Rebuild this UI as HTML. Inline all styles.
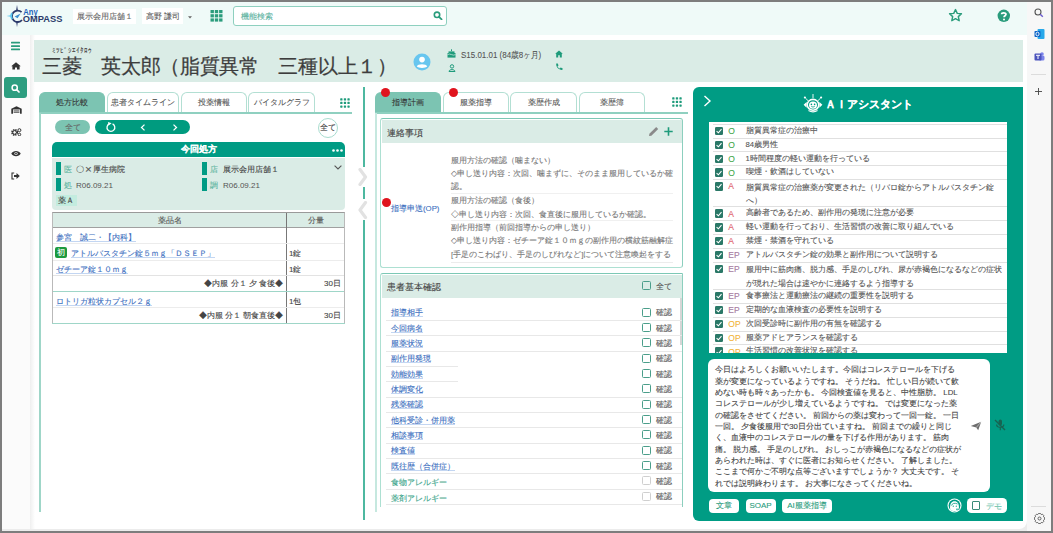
<!DOCTYPE html>
<html><head><meta charset="utf-8">
<style>
*{box-sizing:border-box;margin:0;padding:0}
html,body{width:1053px;height:533px;overflow:hidden}
body{position:relative;background:#7d7d7d;font-family:"Liberation Sans",sans-serif;color:#444;font-size:8px;line-height:1;-webkit-text-stroke:0.1px currentColor}
.a{position:absolute}
.nw{white-space:nowrap}
.tab{position:absolute;top:92px;height:21px;border:1px solid #b3dfd3;border-bottom:none;border-radius:6px 6px 0 0;background:#fff;font-size:8px;color:#555;text-align:center;line-height:20px}
.tab.on{background:#7cc4b2;border-color:#7cc4b2;color:#333}
.lnk{color:#3a6ec0;text-decoration:underline;text-decoration-color:#c3d6f2;font-size:7.8px!important}
</style></head><body>
<!-- window -->
<div class="a" style="left:2px;top:2px;width:1049px;height:529px;background:#ececec"></div>
<!-- header -->
<div class="a" style="left:2px;top:2px;width:1025px;height:33px;background:#effaf8"></div>
<!-- edge sidebar -->
<div class="a" style="left:1027px;top:2px;width:24px;height:529px;background:#f7f7f7"></div>
<!-- left sidebar -->
<div class="a" style="left:2px;top:35px;width:28px;height:494px;background:#fbfbfb"></div>
<!-- main white -->
<div class="a" style="left:30px;top:35px;width:997px;height:494px;background:#fff;border-radius:0 0 8px 0"></div>
<div class="a" style="left:30px;top:35px;width:5px;height:494px;background:linear-gradient(90deg,#efefef,#fff)"></div>
<!-- patient band -->
<div class="a" style="left:34px;top:40px;width:989px;height:42px;background:#daece6"></div>


<!-- HEADER CONTENT -->
<svg class="a" style="left:4px;top:2px" width="64" height="30" viewBox="0 0 64 30">
 <path d="M13 3 L13.9 8.6 L12.1 8.6 Z" fill="#2b3a6b"/>
 <path d="M13 25 L13.9 19.4 L12.1 19.4 Z" fill="#2b3a6b"/>
 <path d="M2.5 14 L8.2 13 L8.2 15 Z" fill="#5cc6ef"/>
 <path d="M17.6 10.2 A5.7 5.7 0 1 0 18 18" fill="none" stroke="#2b3a6b" stroke-width="1.8"/>
 <path d="M8 11 A5.7 5.7 0 0 0 8.2 17.2" fill="none" stroke="#5cc6ef" stroke-width="1.7"/>
 <path d="M10.6 14.6 L16.6 11.6 L13.6 16.2 Z" fill="#3a8fd0"/>
 <text x="19.3" y="12.6" font-family="Liberation Sans" font-weight="bold" font-size="9.2" fill="#1f64b8" textLength="14.5" lengthAdjust="spacingAndGlyphs">Any</text>
 <text x="18.8" y="19.9" font-family="Liberation Sans" font-weight="bold" font-size="9.6" fill="#2b3a6b" textLength="39.6" lengthAdjust="spacingAndGlyphs">OMPASS</text>
</svg>
<div class="a nw" style="left:73px;top:9px;width:63px;height:15px;background:#fff;color:#666;font-size:8px;line-height:16px;padding-left:3.5px">展示会用店舗１</div>
<div class="a nw" style="left:142px;top:8px;width:41px;height:16px;background:#fff;color:#555;font-size:8px;line-height:18px;padding-left:4px">高野 謙司</div>
<svg class="a" style="left:187.5px;top:16px" width="4" height="3"><path d="M0 0.3H4L2 2.6Z" fill="#666"/></svg>
<svg class="a" style="left:210px;top:10px" width="13" height="12" viewBox="0 0 13 12">
 <g fill="#2a9c7c"><rect x="0.5" y="0" width="3.4" height="3.2"/><rect x="4.8" y="0" width="3.4" height="3.2"/><rect x="9.1" y="0" width="3.4" height="3.2"/>
 <rect x="0.5" y="4.2" width="3.4" height="3.2"/><rect x="4.8" y="4.2" width="3.4" height="3.2"/><rect x="9.1" y="4.2" width="3.4" height="3.2"/>
 <rect x="0.5" y="8.4" width="3.4" height="3.2"/><rect x="4.8" y="8.4" width="3.4" height="3.2"/><rect x="9.1" y="8.4" width="3.4" height="3.2"/></g>
</svg>
<div class="a" style="left:233px;top:6px;width:214px;height:20px;background:#fff;border:1px solid #8ed0bf;border-radius:3px"></div>
<div class="a nw" style="left:241px;top:12px;font-size:8px;color:#5cb39f;line-height:9px">機能検索</div>
<svg class="a" style="left:433px;top:11px" width="10" height="9" viewBox="0 0 10 9"><circle cx="4" cy="3.8" r="2.7" fill="none" stroke="#2a9c7c" stroke-width="1.6"/><path d="M6 5.8 L8.6 8.3" stroke="#2a9c7c" stroke-width="1.8" stroke-linecap="round"/></svg>
<svg class="a" style="left:948px;top:8px" width="15" height="15" viewBox="0 0 24 24"><path d="M12 2.5 L14.8 8.6 L21.5 9.3 L16.5 13.8 L17.9 20.4 L12 17 L6.1 20.4 L7.5 13.8 L2.5 9.3 L9.2 8.6 Z" fill="none" stroke="#2a9c7c" stroke-width="2.3" stroke-linejoin="round"/></svg>
<svg class="a" style="left:997px;top:9px" width="14" height="14" viewBox="0 0 14 14"><circle cx="6.8" cy="6.8" r="6.2" fill="#2a9c7c"/><path d="M4.6 5.2 C4.6 3.4 9 3.3 9 5.3 C9 6.7 7 6.8 7 8.3" fill="none" stroke="#fff" stroke-width="1.7"/><circle cx="7" cy="10.4" r="1" fill="#fff"/></svg>
<!-- edge sidebar icons -->
<svg class="a" style="left:1034px;top:8px" width="10" height="10" viewBox="0 0 10 10"><circle cx="4" cy="4" r="3" fill="none" stroke="#555" stroke-width="1.1"/><path d="M6.2 6.2 L8.8 8.8" stroke="#6a5acd" stroke-width="1.4"/></svg>
<svg class="a" style="left:1034px;top:28px" width="11" height="12" viewBox="0 0 11 12"><rect x="3.5" y="1" width="7" height="10" rx="1" fill="#28a8ea"/><rect x="0.5" y="3" width="6" height="6" rx="0.8" fill="#0a64c8"/><ellipse cx="3.5" cy="6" rx="1.6" ry="1.9" fill="none" stroke="#fff" stroke-width="0.9"/></svg>
<svg class="a" style="left:1034px;top:51px" width="11" height="11" viewBox="0 0 11 11"><circle cx="8" cy="3" r="1.8" fill="#7b83eb"/><rect x="5" y="4.5" width="5.5" height="5" rx="1.5" fill="#7b83eb"/><rect x="0.5" y="2.5" width="7" height="7" rx="1" fill="#4b53bc"/><path d="M2 4.3H6M4 4.3V8" stroke="#fff" stroke-width="1"/></svg>
<div class="a" style="left:1031px;top:74px;width:15px;height:1px;background:#dcdcdc"></div>
<svg class="a" style="left:1034px;top:87px" width="9" height="9" viewBox="0 0 9 9"><path d="M4.5 1V8M1 4.5H8" stroke="#444" stroke-width="0.9"/></svg>
<div class="a" style="left:1031px;top:506px;width:15px;height:1px;background:#dcdcdc"></div>
<svg class="a" style="left:1034px;top:513px" width="11" height="11" viewBox="0 0 11 11"><path d="M9.63 3.98 L10.62 4.59 L10.62 6.41 L9.63 7.02 L9.49 7.35 L9.76 8.48 L8.48 9.76 L7.35 9.49 L7.02 9.63 L6.41 10.62 L4.59 10.62 L3.98 9.63 L3.65 9.49 L2.52 9.76 L1.24 8.48 L1.51 7.35 L1.37 7.02 L0.38 6.41 L0.38 4.59 L1.37 3.98 L1.51 3.65 L1.24 2.52 L2.52 1.24 L3.65 1.51 L3.98 1.37 L4.59 0.38 L6.41 0.38 L7.02 1.37 L7.35 1.51 L8.48 1.24 L9.76 2.52 L9.49 3.65 Z" fill="none" stroke="#555" stroke-width="0.9" stroke-linejoin="round"/><circle cx="5.5" cy="5.5" r="1.5" fill="none" stroke="#555" stroke-width="0.9"/></svg>


<!-- LEFT SIDEBAR ICONS -->
<svg class="a" style="left:11px;top:41px" width="10" height="10" viewBox="0 0 10 10"><g fill="#2a9c7c"><rect x="0" y="0.8" width="9" height="1.7" rx="0.5"/><rect x="0" y="4.2" width="9" height="1.7" rx="0.5"/><rect x="0" y="7.6" width="9" height="1.7" rx="0.5"/></g></svg>
<svg class="a" style="left:11px;top:62px" width="10" height="8" viewBox="0 0 10 8"><path d="M5 0.3 L9.8 4.3 L8.6 4.3 L8.6 7.6 L6 7.6 L6 5.4 L4 5.4 L4 7.6 L1.4 7.6 L1.4 4.3 L0.2 4.3 Z" fill="#333"/></svg>
<div class="a" style="left:4px;top:77px;width:23px;height:21px;background:#2e9e80;border-radius:3px"></div>
<svg class="a" style="left:11px;top:84px" width="9" height="9" viewBox="0 0 9 9"><circle cx="3.7" cy="3.7" r="2.6" fill="none" stroke="#fff" stroke-width="1.5"/><path d="M5.6 5.6 L8 8" stroke="#fff" stroke-width="1.7" stroke-linecap="round"/></svg>
<svg class="a" style="left:11px;top:106px" width="11" height="8" viewBox="0 0 11 8"><path d="M0.3 2.8 L5.5 0.2 L10.7 2.8 L10.7 7.8 L9 7.8 L9 3.6 L2 3.6 L2 7.8 L0.3 7.8 Z" fill="#333"/><rect x="2.6" y="4.4" width="5.8" height="1" fill="#555"/><rect x="2.6" y="5.8" width="5.8" height="1" fill="#555"/></svg>
<svg class="a" style="left:11px;top:128px" width="11" height="8" viewBox="0 0 11 8"><circle cx="3.6" cy="4.4" r="2.6" fill="none" stroke="#333" stroke-width="1.8" stroke-dasharray="1.3 0.8"/><circle cx="3.6" cy="4.4" r="1.8" fill="none" stroke="#333" stroke-width="1"/><circle cx="8.4" cy="2.2" r="1.5" fill="none" stroke="#333" stroke-width="1"/><circle cx="8.4" cy="6.5" r="1.3" fill="none" stroke="#333" stroke-width="1"/></svg>
<svg class="a" style="left:11px;top:150px" width="10" height="7" viewBox="0 0 10 7"><path d="M0.3 3.5 C2 0 8 0 9.7 3.5 C8 7 2 7 0.3 3.5 Z" fill="#333"/><circle cx="5" cy="3.5" r="1.6" fill="#fafafa"/><circle cx="5" cy="3.5" r="0.9" fill="#333"/></svg>
<svg class="a" style="left:11px;top:172px" width="9" height="8" viewBox="0 0 9 8"><path d="M3.2 1 L1 1 L1 7 L3.2 7" fill="none" stroke="#333" stroke-width="1.1"/><path d="M3 3 L5.5 3 L5.5 1 L8.8 4 L5.5 7 L5.5 5 L3 5 Z" fill="#333"/></svg>

<!-- PATIENT BAND -->
<div class="a nw" style="left:52px;top:47px;font-size:6.8px;color:#555;letter-spacing:0px;line-height:8px">ﾐﾂﾋﾞｼｴｲﾀﾛｳ</div>
<div class="a nw" style="left:42px;top:55px;font-size:19.6px;letter-spacing:-0.3px;color:#3d3d3d;line-height:22px;-webkit-text-stroke:0.25px #3d3d3d">三菱　英太郎（脂質異常　三種以上１）</div>
<svg class="a" style="left:413px;top:53px" width="18" height="18" viewBox="0 0 18 18"><circle cx="9" cy="9" r="8.5" fill="#67c6ef"/><circle cx="9" cy="6.6" r="2.8" fill="#fff"/><path d="M3.8 13.6 C4.5 10.4 13.5 10.4 14.2 13.6 C12.6 15.3 5.4 15.3 3.8 13.6 Z" fill="#fff"/></svg>
<svg class="a" style="left:447px;top:49px" width="9" height="9" viewBox="0 0 9 9"><rect x="0.5" y="4" width="8" height="4.6" fill="#1e9b7b"/><rect x="1.5" y="2.4" width="6" height="1.8" fill="#1e9b7b"/><rect x="4" y="0.3" width="1" height="1.8" fill="#1e9b7b"/><path d="M0.5 5.6 Q2.5 4.6 4.5 5.6 Q6.5 6.6 8.5 5.6" stroke="#daece6" stroke-width="0.7" fill="none"/></svg>
<div class="a nw" style="left:460.5px;top:49.5px;font-size:9.4px;color:#555;line-height:10px;transform:scaleX(0.85);transform-origin:0 0">S15.01.01 (84歳8ヶ月)</div>
<svg class="a" style="left:448px;top:64px" width="8" height="8" viewBox="0 0 8 8"><circle cx="4" cy="2.4" r="1.7" fill="none" stroke="#1e9b7b" stroke-width="1"/><path d="M1 7.5 C1 5 7 5 7 7.5 Z" fill="none" stroke="#1e9b7b" stroke-width="1"/></svg>
<svg class="a" style="left:555px;top:50px" width="8" height="8" viewBox="0 0 8 8"><path d="M4 0.5 L7.8 3.8 L6.8 3.8 L6.8 7.5 L4.8 7.5 L4.8 5.3 L3.2 5.3 L3.2 7.5 L1.2 7.5 L1.2 3.8 L0.2 3.8 Z" fill="#1e9b7b"/></svg>
<svg class="a" style="left:555px;top:63px" width="8" height="8" viewBox="0 0 8 8"><path d="M1.2 0.6 L2.8 0.4 L3.5 2.4 L2.5 3.2 C3 4.4 3.7 5.2 4.8 5.6 L5.6 4.6 L7.6 5.3 L7.4 6.9 C4 7.3 0.8 4.2 1.2 0.6 Z" fill="#1e9b7b"/></svg>


<!-- LEFT PANEL -->
<div class="tab on" style="left:39px;width:66px">処方比較</div>
<div class="tab" style="left:107px;width:72px">患者タイムライン</div>
<div class="tab" style="left:181px;width:66px">投薬情報</div>
<div class="tab" style="left:248px;width:67px">バイタルグラフ</div>
<div class="a" style="left:39px;top:112px;width:313px;height:2px;background:#8fd0c0"></div>
<svg class="a" style="left:340px;top:98px" width="10" height="10" viewBox="0 0 10 10"><g fill="#1e9b7b"><rect x="0.2" y="0.2" width="2.3" height="2.3" rx="0.6"/><rect x="3.8" y="0.2" width="2.3" height="2.3" rx="0.6"/><rect x="7.4" y="0.2" width="2.3" height="2.3" rx="0.6"/><rect x="0.2" y="3.8" width="2.3" height="2.3" rx="0.6"/><rect x="3.8" y="3.8" width="2.3" height="2.3" rx="0.6"/><rect x="7.4" y="3.8" width="2.3" height="2.3" rx="0.6"/><rect x="0.2" y="7.4" width="2.3" height="2.3" rx="0.6"/><rect x="3.8" y="7.4" width="2.3" height="2.3" rx="0.6"/><rect x="7.4" y="7.4" width="2.3" height="2.3" rx="0.6"/></g></svg>
<div class="a" style="left:39px;top:113px;width:2px;height:399px;background:#9fd6c8"></div>
<div class="a nw" style="left:55px;top:120px;width:35px;height:14px;border-radius:7px;background:#7cc4b2;color:#666;font-size:8px;line-height:16px;text-align:center">全て</div>
<div class="a" style="left:95px;top:120px;width:95px;height:14px;border-radius:7px;background:#009b7f"></div>
<svg class="a" style="left:105px;top:121px" width="12" height="12" viewBox="0 0 12 12"><path d="M7.6 2.9 A3.9 3.9 0 1 1 4.2 2.9" fill="none" stroke="#fff" stroke-width="1.3"/><path d="M3 1 L6.6 2.2 L3.6 4.6 Z" fill="#fff"/></svg>
<svg class="a" style="left:140px;top:124px" width="6" height="7" viewBox="0 0 6 7"><path d="M4.5 0.6 L1.5 3.5 L4.5 6.4" fill="none" stroke="#fff" stroke-width="1.3"/></svg>
<svg class="a" style="left:172px;top:124px" width="6" height="7" viewBox="0 0 6 7"><path d="M1.5 0.6 L4.5 3.5 L1.5 6.4" fill="none" stroke="#fff" stroke-width="1.3"/></svg>
<div class="a nw" style="left:318px;top:118px;width:20px;height:20px;border-radius:50%;border:1px solid #a8dccf;background:#fff;color:#444;font-size:8px;line-height:18px;text-align:center">全て</div>

<div class="a" style="left:52px;top:142px;width:293px;height:15px;background:#009b84;border-radius:5px 5px 0 0"></div>
<div class="a nw" style="left:52px;top:142px;width:293px;height:15px;color:#fff;font-size:8.5px;line-height:15px;text-align:center;font-weight:bold">今回処方</div>
<svg class="a" style="left:332px;top:149px" width="11" height="3" viewBox="0 0 11 3"><circle cx="1.5" cy="1.5" r="1.3" fill="#fff"/><circle cx="5.5" cy="1.5" r="1.3" fill="#fff"/><circle cx="9.5" cy="1.5" r="1.3" fill="#fff"/></svg>
<div class="a" style="left:52px;top:158px;width:293px;height:52px;background:#daece6;border-radius:0 0 4px 4px"></div>
<div class="a" style="left:56px;top:162px;width:5px;height:13px;background:#009b84"></div>
<div class="a" style="left:56px;top:178px;width:5px;height:13px;background:#009b84"></div>
<div class="a" style="left:202px;top:162px;width:5px;height:13px;background:#009b84"></div>
<div class="a" style="left:202px;top:178px;width:5px;height:13px;background:#009b84"></div>
<div class="a nw" style="left:64px;top:165px;font-size:8px;line-height:10px;color:#5fb5a0">医</div>
<div class="a nw" style="left:76px;top:165px;font-size:8px;line-height:10px;color:#444">〇<span style="display:inline-block;transform:scale(1.45,1.3);margin:0 1.8px 0 2.2px;color:#555">×</span>厚生病院</div>
<div class="a nw" style="left:64px;top:181px;font-size:8px;line-height:10px;color:#5fb5a0">処</div>
<div class="a nw" style="left:76px;top:181px;font-size:8px;line-height:10px;color:#555;-webkit-text-stroke:0">R06.09.21</div>
<div class="a nw" style="left:210px;top:165px;font-size:8px;line-height:10px;color:#5fb5a0">店</div>
<div class="a nw" style="left:223px;top:165px;font-size:8px;line-height:10px;color:#444">展示会用店舗１</div>
<div class="a nw" style="left:210px;top:181px;font-size:8px;line-height:10px;color:#5fb5a0">調</div>
<div class="a nw" style="left:223px;top:181px;font-size:8px;line-height:10px;color:#555;-webkit-text-stroke:0">R06.09.21</div>
<svg class="a" style="left:334px;top:165px" width="8" height="5" viewBox="0 0 8 5"><path d="M0.6 0.6 L4 4 L7.4 0.6" fill="none" stroke="#555" stroke-width="1.1"/></svg>
<div class="a nw" style="left:56px;top:195px;width:21px;height:11px;background:#c3ecdf;color:#444;font-size:8px;line-height:11px;padding-left:2px">薬Ａ</div>


<!-- RX TABLE -->
<div class="a" style="left:52px;top:212px;width:293px;height:112px;border:1px solid #b9b9b9;border-top:1.5px solid #9a9a9a;background:#fff"></div>
<div class="a" style="left:53px;top:213px;width:291px;height:15px;background:#daece6;border-bottom:1.5px solid #a0a0a0"></div>
<div class="a" style="left:286px;top:213px;width:1px;height:110px;background:#777"></div>
<div class="a nw" style="left:53px;top:213px;width:233px;height:15px;font-size:8px;line-height:15px;text-align:center;color:#555">薬品名</div>
<div class="a nw" style="left:287px;top:213px;width:57px;height:15px;font-size:8px;line-height:15px;text-align:center;color:#555">分量</div>
<div class="a" style="left:53px;top:243px;width:291px;height:1px;background:#ececec"></div>
<div class="a" style="left:53px;top:260px;width:291px;height:1px;background:#ececec"></div>
<div class="a" style="left:53px;top:275px;width:291px;height:1px;background:#e3e3e3"></div>
<div class="a" style="left:53px;top:291px;width:291px;height:1px;background:#9fd6c8"></div>
<div class="a" style="left:53px;top:307px;width:291px;height:1px;background:#ececec"></div>
<div class="a" style="left:52px;top:323px;width:293px;height:1px;background:#9fd6c8"></div>
<div class="a nw lnk" style="left:56px;top:233.0px;font-size:8px;line-height:10px">参宮　誠二・【内科】</div>
<div class="a nw" style="left:55px;top:247px;width:12px;height:11px;background:#1d9a3e;border-radius:2px;color:#fff;font-size:8px;line-height:11px;text-align:center">初</div>
<div class="a nw lnk" style="left:71px;top:249.0px;font-size:8px;line-height:10px">アトルバスタチン錠５ｍｇ「ＤＳＥＰ」</div>
<div class="a nw lnk" style="left:56px;top:265.0px;font-size:8px;line-height:10px">ゼチーア錠１０ｍｇ</div>
<div class="a nw lnk" style="left:56px;top:297.0px;font-size:8px;line-height:10px">ロトリガ粒状カプセル２ｇ</div>
<div class="a nw" style="left:289px;top:249.0px;font-size:8px;line-height:10px">1錠</div>
<div class="a nw" style="left:289px;top:265.0px;font-size:8px;line-height:10px">1錠</div>
<div class="a nw" style="left:289px;top:297.0px;font-size:8px;line-height:10px">1包</div>
<div class="a nw" style="left:150px;top:279px;width:133px;font-size:8px;line-height:10px;text-align:right">◆内服 分１ 夕 食後◆</div>
<div class="a nw" style="left:150px;top:311px;width:133px;font-size:8px;line-height:10px;text-align:right">◆内服 分１ 朝食直後◆</div>
<div class="a nw" style="left:290px;top:279px;width:51px;font-size:8px;line-height:10px;text-align:right">30日</div>
<div class="a nw" style="left:290px;top:311px;width:51px;font-size:8px;line-height:10px;text-align:right">30日</div>


<!-- MIDDLE PANEL -->
<div class="a" style="left:363px;top:87px;width:2px;height:433px;background:#4db8a0"></div>
<div class="a" style="left:362px;top:167px;width:4px;height:20px;background:#fff"></div><svg class="a" style="left:358px;top:168px" width="10" height="18" viewBox="0 0 10 18"><path d="M2 1.5 L7.5 9 L2 16.5" fill="none" stroke="#e2e2e2" stroke-width="3.2" stroke-linecap="round" stroke-linejoin="round"/></svg>
<div class="a" style="left:362px;top:199px;width:4px;height:21px;background:#fff"></div><svg class="a" style="left:358px;top:200.5px" width="10" height="18" viewBox="0 0 10 18"><path d="M7.5 1.5 L2 9 L7.5 16.5" fill="none" stroke="#e2e2e2" stroke-width="3.2" stroke-linecap="round" stroke-linejoin="round"/></svg>
<div class="tab on" style="left:375px;width:66px">指導計画</div>
<div class="tab" style="left:443px;width:66px">服薬指導</div>
<div class="tab" style="left:510px;width:67px">薬歴作成</div>
<div class="tab" style="left:579px;width:66px">薬歴簿</div>
<div class="a" style="left:381px;top:88px;width:9px;height:9px;border-radius:50%;background:#e0141e"></div>
<div class="a" style="left:449px;top:88px;width:9px;height:9px;border-radius:50%;background:#e0141e"></div>
<div class="a" style="left:375px;top:112px;width:313px;height:2px;background:#8fd0c0"></div>
<svg class="a" style="left:672px;top:97px" width="10" height="10" viewBox="0 0 10 10"><g fill="#1e9b7b"><rect x="0.2" y="0.2" width="2.3" height="2.3" rx="0.6"/><rect x="3.8" y="0.2" width="2.3" height="2.3" rx="0.6"/><rect x="7.4" y="0.2" width="2.3" height="2.3" rx="0.6"/><rect x="0.2" y="3.8" width="2.3" height="2.3" rx="0.6"/><rect x="3.8" y="3.8" width="2.3" height="2.3" rx="0.6"/><rect x="7.4" y="3.8" width="2.3" height="2.3" rx="0.6"/><rect x="0.2" y="7.4" width="2.3" height="2.3" rx="0.6"/><rect x="3.8" y="7.4" width="2.3" height="2.3" rx="0.6"/><rect x="7.4" y="7.4" width="2.3" height="2.3" rx="0.6"/></g></svg>
<div class="a" style="left:375px;top:113px;width:2px;height:399px;background:#c6e8df"></div>

<!-- card 1 -->
<div class="a" style="left:380px;top:118px;width:303px;height:150px;border:1.5px solid #ade0d2;border-top-color:#7cc8b5;border-right-color:#8ccfbe;border-radius:3px;background:#fff"></div>
<div class="a" style="left:381.5px;top:119.5px;width:300px;height:23px;background:#daece6"></div>
<div class="a nw" style="left:387px;top:128px;font-size:9px;line-height:10px;color:#444">連絡事項</div>
<svg class="a" style="left:648px;top:126px" width="12" height="11" viewBox="0 0 12 11"><path d="M1 10 L1.4 7.8 L8.2 1 L10.2 3 L3.4 9.8 Z" fill="#8a8a8a"/></svg>
<svg class="a" style="left:664px;top:127px" width="9" height="9" viewBox="0 0 9 9"><path d="M4.5 0.3V8.7M0.3 4.5H8.7" stroke="#1e9b7b" stroke-width="1.6"/></svg>
<div class="a" style="left:382px;top:198px;width:9px;height:9px;border-radius:50%;background:#e0141e"></div>
<div class="a nw" style="left:391px;top:204px;line-height:9px;color:#3a6ec0;font-size:7.8px">指導申送(OP)</div>
<div class="a nw" style="left:451px;top:153.5px;width:222px;font-size:7.85px;line-height:13.4px;color:#777">
服用方法の確認（噛まない）<br>◇申し送り内容：次回、噛まずに、そのまま服用しているか確<br>認。</div>
<div class="a" style="left:451px;top:193px;width:222px;height:1px;background:#f0f0f0"></div>
<div class="a nw" style="left:451px;top:194.3px;width:222px;font-size:7.85px;line-height:13.4px;color:#777">
服用方法の確認（食後）<br>◇申し送り内容：次回、食直後に服用しているか確認。</div>
<div class="a" style="left:451px;top:220px;width:222px;height:1px;background:#f0f0f0"></div>
<div class="a nw" style="left:451px;top:220.8px;width:222px;font-size:7.85px;line-height:13.4px;color:#777">
副作用指導（前回指導からの申し送り）<br>◇申し送り内容：ゼチーア錠１０ｍｇの副作用の横紋筋融解症<br>[手足のこわばり、手足のしびれなど]について注意喚起をする</div>
<div class="a" style="left:451px;top:262px;width:222px;height:1px;background:#ececec"></div>


<!-- card 2 -->
<div class="a" style="left:380px;top:273px;width:303px;height:234px;border:1.5px solid #ade0d2;border-top-color:#7cc8b5;border-right-color:#8ccfbe;border-bottom:none;border-radius:3px 0 0 0;background:#fff"></div>
<div class="a" style="left:680px;top:298px;width:1.5px;height:47px;background:#d6d6d6"></div>
<div class="a" style="left:381.5px;top:274.5px;width:300px;height:23.5px;background:#daece6"></div>
<div class="a nw" style="left:387px;top:282px;font-size:9px;line-height:10px;color:#444">患者基本確認</div>
<div class="a" style="left:642px;top:281px;width:9px;height:9px;border:1.3px solid #4a9e8a;border-radius:1.5px"></div>
<div class="a nw" style="left:656px;top:282.3px;font-size:8px;line-height:10px;color:#555">全て</div>
<div class="a" style="left:390px;top:507px;width:300px;height:20px;background:#fff"></div>
<div class="a nw lnk" style="left:391px;top:308.3px;font-size:7.8px;line-height:10px;">指導相手</div>
<div class="a" style="left:642px;top:307.5px;width:9px;height:9px;border:1.3px solid #4a9e8a;border-radius:1.5px"></div>
<div class="a nw" style="left:656px;top:308.3px;font-size:8px;line-height:10px;color:#555">確認</div>
<div class="a" style="left:386px;top:320.0px;width:296px;height:1px;background:#e8e8e8"></div>
<div class="a nw lnk" style="left:391px;top:323.6px;font-size:7.8px;line-height:10px;">今回病名</div>
<div class="a" style="left:642px;top:322.8px;width:9px;height:9px;border:1.3px solid #4a9e8a;border-radius:1.5px"></div>
<div class="a nw" style="left:656px;top:323.6px;font-size:8px;line-height:10px;color:#555">確認</div>
<div class="a" style="left:386px;top:335.3px;width:296px;height:1px;background:#e8e8e8"></div>
<div class="a nw lnk" style="left:391px;top:339.0px;font-size:7.8px;line-height:10px;">服薬状況</div>
<div class="a" style="left:642px;top:338.2px;width:9px;height:9px;border:1.3px solid #4a9e8a;border-radius:1.5px"></div>
<div class="a nw" style="left:656px;top:339.0px;font-size:8px;line-height:10px;color:#555">確認</div>
<div class="a" style="left:386px;top:350.7px;width:296px;height:1px;background:#e8e8e8"></div>
<div class="a nw lnk" style="left:391px;top:354.3px;font-size:7.8px;line-height:10px;">副作用発現</div>
<div class="a" style="left:642px;top:353.5px;width:9px;height:9px;border:1.3px solid #4a9e8a;border-radius:1.5px"></div>
<div class="a nw" style="left:656px;top:354.3px;font-size:8px;line-height:10px;color:#555">確認</div>
<div class="a" style="left:386px;top:366.0px;width:72px;height:1px;background:#e8e8e8"></div>
<div class="a nw lnk" style="left:391px;top:369.6px;font-size:7.8px;line-height:10px;">効能効果</div>
<div class="a" style="left:642px;top:368.8px;width:9px;height:9px;border:1.3px solid #4a9e8a;border-radius:1.5px"></div>
<div class="a nw" style="left:656px;top:369.6px;font-size:8px;line-height:10px;color:#555">確認</div>
<div class="a" style="left:386px;top:381.3px;width:72px;height:1px;background:#e8e8e8"></div>
<div class="a nw lnk" style="left:391px;top:384.9px;font-size:7.8px;line-height:10px;">体調変化</div>
<div class="a" style="left:642px;top:384.1px;width:9px;height:9px;border:1.3px solid #4a9e8a;border-radius:1.5px"></div>
<div class="a nw" style="left:656px;top:384.9px;font-size:8px;line-height:10px;color:#555">確認</div>
<div class="a" style="left:386px;top:396.6px;width:296px;height:1px;background:#e8e8e8"></div>
<div class="a nw lnk" style="left:391px;top:400.3px;font-size:7.8px;line-height:10px;">残薬確認</div>
<div class="a" style="left:642px;top:399.5px;width:9px;height:9px;border:1.3px solid #4a9e8a;border-radius:1.5px"></div>
<div class="a nw" style="left:656px;top:400.3px;font-size:8px;line-height:10px;color:#555">確認</div>
<div class="a" style="left:386px;top:412.0px;width:296px;height:1px;background:#e8e8e8"></div>
<div class="a nw lnk" style="left:391px;top:415.6px;font-size:7.8px;line-height:10px;">他科受診・併用薬</div>
<div class="a" style="left:642px;top:414.8px;width:9px;height:9px;border:1.3px solid #4a9e8a;border-radius:1.5px"></div>
<div class="a nw" style="left:656px;top:415.6px;font-size:8px;line-height:10px;color:#555">確認</div>
<div class="a" style="left:386px;top:427.3px;width:296px;height:1px;background:#e8e8e8"></div>
<div class="a nw lnk" style="left:391px;top:430.9px;font-size:7.8px;line-height:10px;">相談事項</div>
<div class="a" style="left:642px;top:430.1px;width:9px;height:9px;border:1.3px solid #4a9e8a;border-radius:1.5px"></div>
<div class="a nw" style="left:656px;top:430.9px;font-size:8px;line-height:10px;color:#555">確認</div>
<div class="a" style="left:386px;top:442.6px;width:296px;height:1px;background:#e8e8e8"></div>
<div class="a nw lnk" style="left:391px;top:446.3px;font-size:7.8px;line-height:10px;">検査値</div>
<div class="a" style="left:642px;top:445.5px;width:9px;height:9px;border:1.3px solid #4a9e8a;border-radius:1.5px"></div>
<div class="a nw" style="left:656px;top:446.3px;font-size:8px;line-height:10px;color:#555">確認</div>
<div class="a" style="left:386px;top:458.0px;width:296px;height:1px;background:#e8e8e8"></div>
<div class="a nw lnk" style="left:391px;top:461.6px;font-size:7.8px;line-height:10px;">既往歴（合併症）</div>
<div class="a" style="left:642px;top:460.8px;width:9px;height:9px;border:1.3px solid #4a9e8a;border-radius:1.5px"></div>
<div class="a nw" style="left:656px;top:461.6px;font-size:8px;line-height:10px;color:#555">確認</div>
<div class="a" style="left:386px;top:473.3px;width:296px;height:1px;background:#e8e8e8"></div>
<div class="a nw " style="left:391px;top:478.2px;font-size:7.8px;line-height:10px;color:#3aa58a;">食物アレルギー</div>
<div class="a" style="left:642px;top:476.1px;width:9px;height:9px;border:1.3px solid #cfcfcf;border-radius:1.5px"></div>
<div class="a nw" style="left:656px;top:476.9px;font-size:8px;line-height:10px;color:#555">確認</div>
<div class="a" style="left:386px;top:488.6px;width:296px;height:1px;background:#e8e8e8"></div>
<div class="a nw " style="left:391px;top:493.6px;font-size:7.8px;line-height:10px;color:#3aa58a;">薬剤アレルギー</div>
<div class="a" style="left:642px;top:491.5px;width:9px;height:9px;border:1.3px solid #cfcfcf;border-radius:1.5px"></div>
<div class="a nw" style="left:656px;top:492.3px;font-size:8px;line-height:10px;color:#555">確認</div>
<div class="a" style="left:386px;top:504.0px;width:296px;height:1px;background:#e8e8e8"></div>

<!-- AI panel -->
<div class="a" style="left:693px;top:87px;width:330px;height:434px;background:#009c84;border-radius:6px 0 0 6px"></div>

<!-- AI CONTENT -->
<svg class="a" style="left:703px;top:95px" width="9" height="12" viewBox="0 0 9 12"><path d="M1.5 1 L7 6 L1.5 11" fill="none" stroke="#fff" stroke-width="1.4"/></svg>
<svg class="a" style="left:803px;top:94px" width="20" height="19" viewBox="0 0 20 19">
 <path d="M10 0 V4" stroke="#fff" stroke-width="0.9"/>
 <circle cx="1.9" cy="3.5" r="1.1" fill="#fff"/><circle cx="18.1" cy="3.5" r="1.1" fill="#fff"/>
 <path d="M2.5 4.2 L5.2 6.8 M17.5 4.2 L14.8 6.8" stroke="#fff" stroke-width="0.9"/>
 <ellipse cx="10" cy="10.8" rx="6.6" ry="6.2" fill="#fff"/>
 <path d="M3.6 8 L0.6 10.8 L3.6 13.8 Z M16.4 8 L19.4 10.8 L16.4 13.8 Z" fill="#fff"/>
 <ellipse cx="10" cy="10.8" rx="5" ry="4.6" fill="#009c84"/>
 <ellipse cx="10" cy="11.2" rx="4" ry="3.6" fill="#fff"/>
 <circle cx="8.4" cy="10.4" r="0.8" fill="#009c84"/><circle cx="11.6" cy="10.4" r="0.8" fill="#009c84"/>
 <path d="M8.3 12.4 Q10 13.8 11.7 12.4" stroke="#009c84" stroke-width="0.8" fill="none"/>
 <path d="M5.5 16.5 Q10 19.2 14.5 16.5" stroke="#fff" stroke-width="1.1" fill="none"/>
</svg>
<div class="a nw" style="left:825px;top:98.5px;font-size:10.6px;line-height:11px;color:#fff;font-weight:bold;letter-spacing:0px">ＡＩアシスタント</div>
<div class="a" style="left:708.5px;top:121.5px;width:298.5px;height:231px;background:#fff;overflow:hidden">
<div class="a" style="left:4.8px;top:2.80px;width:293.5px;height:1px;background:#e0e0e0"></div>
<div class="a" style="left:6.2px;top:5.40px;width:8.3px;height:8.3px;background:#2a7867;border-radius:1.3px"></div><svg class="a" style="left:7.3px;top:6.50px" width="6" height="6" viewBox="0 0 6 6"><path d="M0.6 3.1 L2.4 4.8 L5.5 1.2" fill="none" stroke="#fff" stroke-width="1.1"/></svg><div class="a nw" style="left:19.8px;top:4.50px;font-size:8.5px;line-height:10px;color:#45a84a">O</div><div class="a nw" style="left:37.0px;top:3.40px;font-size:7.7px;line-height:12px;color:#555">脂質異常症の治療中</div>
<div class="a" style="left:4.8px;top:16.10px;width:293.5px;height:1px;background:#e0e0e0"></div>
<div class="a" style="left:6.2px;top:19.20px;width:8.3px;height:8.3px;background:#2a7867;border-radius:1.3px"></div><svg class="a" style="left:7.3px;top:20.30px" width="6" height="6" viewBox="0 0 6 6"><path d="M0.6 3.1 L2.4 4.8 L5.5 1.2" fill="none" stroke="#fff" stroke-width="1.1"/></svg><div class="a nw" style="left:19.8px;top:18.30px;font-size:8.5px;line-height:10px;color:#45a84a">O</div><div class="a nw" style="left:37.0px;top:17.20px;font-size:7.7px;line-height:12px;color:#555">84歳男性</div>
<div class="a" style="left:4.8px;top:29.95px;width:293.5px;height:1px;background:#e0e0e0"></div>
<div class="a" style="left:6.2px;top:33.05px;width:8.3px;height:8.3px;background:#2a7867;border-radius:1.3px"></div><svg class="a" style="left:7.3px;top:34.15px" width="6" height="6" viewBox="0 0 6 6"><path d="M0.6 3.1 L2.4 4.8 L5.5 1.2" fill="none" stroke="#fff" stroke-width="1.1"/></svg><div class="a nw" style="left:19.8px;top:32.15px;font-size:8.5px;line-height:10px;color:#45a84a">O</div><div class="a nw" style="left:37.0px;top:31.05px;font-size:7.7px;line-height:12px;color:#555">1時間程度の軽い運動を行っている</div>
<div class="a" style="left:4.8px;top:43.80px;width:293.5px;height:1px;background:#e0e0e0"></div>
<div class="a" style="left:6.2px;top:46.90px;width:8.3px;height:8.3px;background:#2a7867;border-radius:1.3px"></div><svg class="a" style="left:7.3px;top:48.00px" width="6" height="6" viewBox="0 0 6 6"><path d="M0.6 3.1 L2.4 4.8 L5.5 1.2" fill="none" stroke="#fff" stroke-width="1.1"/></svg><div class="a nw" style="left:19.8px;top:46.00px;font-size:8.5px;line-height:10px;color:#45a84a">O</div><div class="a nw" style="left:37.0px;top:44.90px;font-size:7.7px;line-height:12px;color:#555">喫煙・飲酒はしていない</div>
<div class="a" style="left:4.8px;top:57.65px;width:293.5px;height:1px;background:#e0e0e0"></div>
<div class="a" style="left:6.2px;top:60.75px;width:8.3px;height:8.3px;background:#2a7867;border-radius:1.3px"></div><svg class="a" style="left:7.3px;top:61.85px" width="6" height="6" viewBox="0 0 6 6"><path d="M0.6 3.1 L2.4 4.8 L5.5 1.2" fill="none" stroke="#fff" stroke-width="1.1"/></svg><div class="a nw" style="left:19.8px;top:59.85px;font-size:8.5px;line-height:10px;color:#e0606e">A</div><div class="a nw" style="left:37.0px;top:59.15px;font-size:7.7px;line-height:13.3px;color:#555">脂質異常症の治療薬が変更された（リバロ錠からアトルバスタチン錠<br>へ）</div>
<div class="a" style="left:4.8px;top:84.85px;width:293.5px;height:1px;background:#e0e0e0"></div>
<div class="a" style="left:6.2px;top:87.95px;width:8.3px;height:8.3px;background:#2a7867;border-radius:1.3px"></div><svg class="a" style="left:7.3px;top:89.05px" width="6" height="6" viewBox="0 0 6 6"><path d="M0.6 3.1 L2.4 4.8 L5.5 1.2" fill="none" stroke="#fff" stroke-width="1.1"/></svg><div class="a nw" style="left:19.8px;top:87.05px;font-size:8.5px;line-height:10px;color:#e0606e">A</div><div class="a nw" style="left:37.0px;top:85.95px;font-size:7.7px;line-height:12px;color:#555">高齢者であるため、副作用の発現に注意が必要</div>
<div class="a" style="left:4.8px;top:98.70px;width:293.5px;height:1px;background:#e0e0e0"></div>
<div class="a" style="left:6.2px;top:101.80px;width:8.3px;height:8.3px;background:#2a7867;border-radius:1.3px"></div><svg class="a" style="left:7.3px;top:102.90px" width="6" height="6" viewBox="0 0 6 6"><path d="M0.6 3.1 L2.4 4.8 L5.5 1.2" fill="none" stroke="#fff" stroke-width="1.1"/></svg><div class="a nw" style="left:19.8px;top:100.90px;font-size:8.5px;line-height:10px;color:#e0606e">A</div><div class="a nw" style="left:37.0px;top:99.80px;font-size:7.7px;line-height:12px;color:#555">軽い運動を行っており、生活習慣の改善に取り組んでいる</div>
<div class="a" style="left:4.8px;top:112.55px;width:293.5px;height:1px;background:#e0e0e0"></div>
<div class="a" style="left:6.2px;top:115.65px;width:8.3px;height:8.3px;background:#2a7867;border-radius:1.3px"></div><svg class="a" style="left:7.3px;top:116.75px" width="6" height="6" viewBox="0 0 6 6"><path d="M0.6 3.1 L2.4 4.8 L5.5 1.2" fill="none" stroke="#fff" stroke-width="1.1"/></svg><div class="a nw" style="left:19.8px;top:114.75px;font-size:8.5px;line-height:10px;color:#e0606e">A</div><div class="a nw" style="left:37.0px;top:113.65px;font-size:7.7px;line-height:12px;color:#555">禁煙・禁酒を守れている</div>
<div class="a" style="left:4.8px;top:126.40px;width:293.5px;height:1px;background:#e0e0e0"></div>
<div class="a" style="left:6.2px;top:129.50px;width:8.3px;height:8.3px;background:#2a7867;border-radius:1.3px"></div><svg class="a" style="left:7.3px;top:130.60px" width="6" height="6" viewBox="0 0 6 6"><path d="M0.6 3.1 L2.4 4.8 L5.5 1.2" fill="none" stroke="#fff" stroke-width="1.1"/></svg><div class="a nw" style="left:19.8px;top:128.60px;font-size:8.5px;line-height:10px;color:#a57a9e">EP</div><div class="a nw" style="left:37.0px;top:127.50px;font-size:7.7px;line-height:12px;color:#555">アトルバスタチン錠の効果と副作用について説明する</div>
<div class="a" style="left:4.8px;top:140.25px;width:293.5px;height:1px;background:#e0e0e0"></div>
<div class="a" style="left:6.2px;top:143.35px;width:8.3px;height:8.3px;background:#2a7867;border-radius:1.3px"></div><svg class="a" style="left:7.3px;top:144.45px" width="6" height="6" viewBox="0 0 6 6"><path d="M0.6 3.1 L2.4 4.8 L5.5 1.2" fill="none" stroke="#fff" stroke-width="1.1"/></svg><div class="a nw" style="left:19.8px;top:142.45px;font-size:8.5px;line-height:10px;color:#a57a9e">EP</div><div class="a nw" style="left:37.0px;top:141.75px;font-size:7.7px;line-height:13.3px;color:#555">服用中に筋肉痛、脱力感、手足のしびれ、尿が赤褐色になるなどの症状<br>が現れた場合は速やかに連絡するよう指導する</div>
<div class="a" style="left:4.8px;top:167.45px;width:293.5px;height:1px;background:#e0e0e0"></div>
<div class="a" style="left:6.2px;top:170.55px;width:8.3px;height:8.3px;background:#2a7867;border-radius:1.3px"></div><svg class="a" style="left:7.3px;top:171.65px" width="6" height="6" viewBox="0 0 6 6"><path d="M0.6 3.1 L2.4 4.8 L5.5 1.2" fill="none" stroke="#fff" stroke-width="1.1"/></svg><div class="a nw" style="left:19.8px;top:169.65px;font-size:8.5px;line-height:10px;color:#a57a9e">EP</div><div class="a nw" style="left:37.0px;top:168.55px;font-size:7.7px;line-height:12px;color:#555">食事療法と運動療法の継続の重要性を説明する</div>
<div class="a" style="left:4.8px;top:181.30px;width:293.5px;height:1px;background:#e0e0e0"></div>
<div class="a" style="left:6.2px;top:184.40px;width:8.3px;height:8.3px;background:#2a7867;border-radius:1.3px"></div><svg class="a" style="left:7.3px;top:185.50px" width="6" height="6" viewBox="0 0 6 6"><path d="M0.6 3.1 L2.4 4.8 L5.5 1.2" fill="none" stroke="#fff" stroke-width="1.1"/></svg><div class="a nw" style="left:19.8px;top:183.50px;font-size:8.5px;line-height:10px;color:#a57a9e">EP</div><div class="a nw" style="left:37.0px;top:182.40px;font-size:7.7px;line-height:12px;color:#555">定期的な血液検査の必要性を説明する</div>
<div class="a" style="left:4.8px;top:195.15px;width:293.5px;height:1px;background:#e0e0e0"></div>
<div class="a" style="left:6.2px;top:198.25px;width:8.3px;height:8.3px;background:#2a7867;border-radius:1.3px"></div><svg class="a" style="left:7.3px;top:199.35px" width="6" height="6" viewBox="0 0 6 6"><path d="M0.6 3.1 L2.4 4.8 L5.5 1.2" fill="none" stroke="#fff" stroke-width="1.1"/></svg><div class="a nw" style="left:19.8px;top:197.35px;font-size:8.5px;line-height:10px;color:#f2b43a">OP</div><div class="a nw" style="left:37.0px;top:196.25px;font-size:7.7px;line-height:12px;color:#555">次回受診時に副作用の有無を確認する</div>
<div class="a" style="left:4.8px;top:209.00px;width:293.5px;height:1px;background:#e0e0e0"></div>
<div class="a" style="left:6.2px;top:212.10px;width:8.3px;height:8.3px;background:#2a7867;border-radius:1.3px"></div><svg class="a" style="left:7.3px;top:213.20px" width="6" height="6" viewBox="0 0 6 6"><path d="M0.6 3.1 L2.4 4.8 L5.5 1.2" fill="none" stroke="#fff" stroke-width="1.1"/></svg><div class="a nw" style="left:19.8px;top:211.20px;font-size:8.5px;line-height:10px;color:#f2b43a">OP</div><div class="a nw" style="left:37.0px;top:210.10px;font-size:7.7px;line-height:12px;color:#555">服薬アドヒアランスを確認する</div>
<div class="a" style="left:4.8px;top:222.85px;width:293.5px;height:1px;background:#e0e0e0"></div>
<div class="a" style="left:6.2px;top:225.95px;width:8.3px;height:8.3px;background:#2a7867;border-radius:1.3px"></div><svg class="a" style="left:7.3px;top:227.05px" width="6" height="6" viewBox="0 0 6 6"><path d="M0.6 3.1 L2.4 4.8 L5.5 1.2" fill="none" stroke="#fff" stroke-width="1.1"/></svg><div class="a nw" style="left:19.8px;top:225.05px;font-size:8.5px;line-height:10px;color:#f2b43a">OP</div><div class="a nw" style="left:37.0px;top:223.95px;font-size:7.7px;line-height:12px;color:#555">生活習慣の改善状況を確認する</div>
<div class="a" style="left:4.8px;top:236.70px;width:293.5px;height:1px;background:#e0e0e0"></div>
</div>
<div class="a" style="left:708px;top:359px;width:282px;height:133px;background:#fff;border-radius:6px"></div>
<div class="a nw" style="left:715px;top:364.3px;font-size:7.78px;line-height:11.35px;color:#444">今日はよろしくお願いいたします。今回はコレステロールを下げる<br>薬が変更になっているようですね。 そうだね。 忙しい日が続いて飲<br>めない時も時々あったかも。 今回検査値を見ると、中性脂肪。 LDL<br>コレステロールが少し増えているようですね。 では変更になった薬<br>の確認をさせてください。 前回からの薬は変わって一回一錠。 一日<br>一回。 夕食後服用で30日分出ていますね。 前回までの繰りと同じ<br>く、血液中のコレステロールの量を下げる作用があります。 筋肉<br>痛。 脱力感。 手足のしびれ。 おしっこが赤褐色になるなどの症状が<br>あらわれた時は、すぐに医者にお知らせください。 了解しました。<br>ここまで何かご不明な点等ございますでしょうか？ 大丈夫です。 そ<br>れでは説明終わります。 お大事になさってくださいね。</div>
<svg class="a" style="left:970px;top:421px" width="12" height="10" viewBox="0 0 12 10"><path d="M0.8 5 L11.2 0.8 L8.2 9.2 L6.2 6.6 Z" fill="#6e6e6e"/><path d="M6.2 6.6 L11.2 0.8" stroke="#fff" stroke-width="0.5"/></svg>
<svg class="a" style="left:994px;top:419px" width="12" height="12" viewBox="0 0 12 12"><rect x="4.6" y="0.6" width="3.4" height="5.8" rx="1.7" fill="#176452"/><path d="M2.6 5.6 C2.6 9.2 9.8 9.2 9.8 5.6 M6.3 8.6 V11.2" fill="none" stroke="#176452" stroke-width="1.2"/><path d="M1 1 L11 11" stroke="#176452" stroke-width="1.4"/></svg>
<div class="a nw" style="left:709px;top:499px;width:30px;height:13.5px;background:#fff;border-radius:4px;color:#2a9c7c;font-size:8px;line-height:13.5px;text-align:center">文章</div>
<div class="a nw" style="left:745.5px;top:499px;width:30px;height:13.5px;background:#fff;border-radius:4px;color:#2a9c7c;font-size:8px;line-height:13.5px;text-align:center">SOAP</div>
<div class="a nw" style="left:782px;top:499px;width:50px;height:13.5px;background:#fff;border-radius:4px;color:#2a9c7c;font-size:8px;line-height:13.5px;text-align:center">AI服薬指導</div>
<svg class="a" style="left:946.5px;top:498px" width="15" height="15" viewBox="0 0 15 15"><circle cx="7.5" cy="7.5" r="7" fill="#fff"/><circle cx="7.5" cy="7.5" r="5.9" fill="#009c84"/><path d="M3.2 11.8 C2.6 6.5 4 3.2 7.5 3.2 C11 3.2 12.4 6.5 11.8 11.8 C10.5 13.5 4.5 13.5 3.2 11.8 Z" fill="#fff"/><path d="M4.6 7.6 C5 5.2 7.6 4.6 10.6 6" stroke="#009c84" stroke-width="0.8" fill="none"/><circle cx="6.3" cy="8.2" r="0.6" fill="#009c84"/><circle cx="9.3" cy="8.2" r="0.6" fill="#009c84"/><path d="M9 11.2 H12.5" stroke="#009c84" stroke-width="0.9"/></svg>
<div class="a" style="left:967px;top:498px;width:39.5px;height:14.5px;background:#fff;border-radius:4.5px"></div>
<div class="a" style="left:971.5px;top:501px;width:8.6px;height:8.6px;border:1.5px solid #3a8a78;border-radius:1px"></div>
<div class="a nw" style="left:986px;top:501.5px;font-size:8px;line-height:10px;color:#74c6b0">デモ</div>

</body></html>
